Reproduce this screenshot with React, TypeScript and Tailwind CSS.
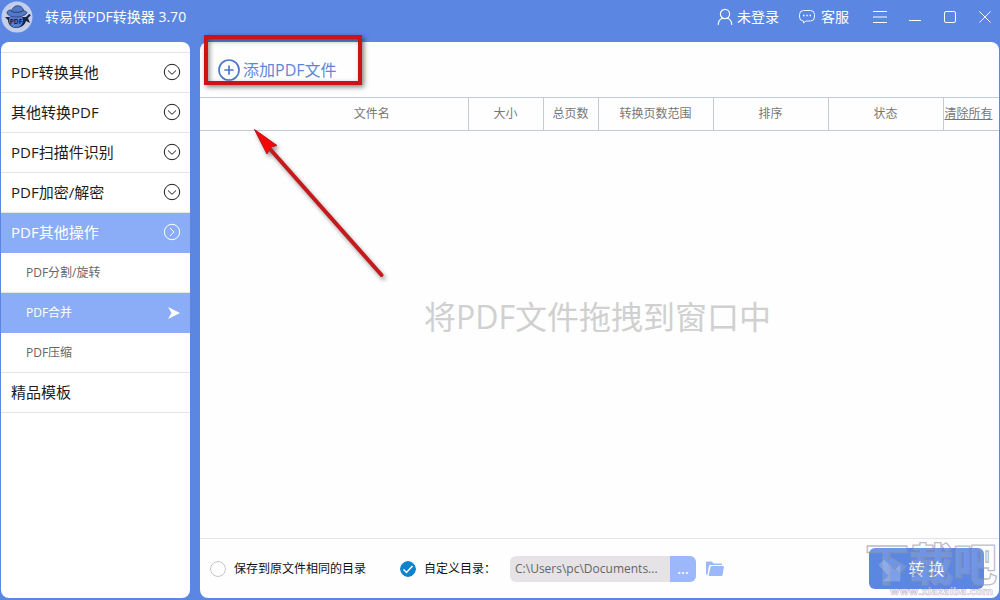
import { useState } from 'react';
import { CirclePlus } from 'lucide-react';

type SubItem = { id: string; label: string };
type Section = { id: string; label: string; items?: SubItem[]; plain?: boolean };

const SECTIONS: Section[] = [
  { id: 'to-other', label: 'PDF转换其他' },
  { id: 'to-pdf', label: '其他转换PDF' },
  { id: 'ocr', label: 'PDF扫描件识别' },
  { id: 'crypt', label: 'PDF加密/解密' },
  {
    id: 'tools',
    label: 'PDF其他操作',
    items: [
      { id: 'split', label: 'PDF分割/旋转' },
      { id: 'merge', label: 'PDF合并' },
      { id: 'compress', label: 'PDF压缩' },
    ],
  },
  { id: 'templates', label: '精品模板', plain: true },
];

const COLUMNS = [
  { label: '文件名', className: 'pl-[76px]' },
  { label: '大小', className: 'w-[75px]' },
  { label: '总页数', className: 'w-[55px]' },
  { label: '转换页数范围', className: 'w-[115px]' },
  { label: '排序', className: 'w-[115px]' },
  { label: '状态', className: 'w-[115px]' },
];

const WINDOW_BUTTONS = [
  { label: '菜单', d: 'M1 2.500h14M1 8h14M1 13.500h14' },
  { label: '最小化', d: 'M2 11.500h12' },
  { label: '最大化', d: 'M4 2.500h8a1.500 1.500 0 0 1 1.500 1.500v8a1.500 1.500 0 0 1-1.500 1.500H4A1.500 1.500 0 0 1 2.500 12V4A1.500 1.500 0 0 1 4 2.500z' },
  { label: '关闭', d: 'M2.500 2.500l11 11M13.500 2.500l-11 11' },
];

function Logo() {
  return (
    <svg viewBox="0 0 32 32" className="h-8 w-8 shrink-0" aria-hidden>
      <circle cx="16" cy="16" r="15.500" fill="#c3cfea" />
      <path d="M7 16h18l3-3 2 1-3 3 2 5-4-2c-1 4-5 7-10 7-5 0-8-4-8-8l-3-3z" fill="#1b2440" />
      <circle cx="15" cy="19.500" r="7" fill="#547ed0" />
      <path d="M6 12c0-3 3-3 5-3 1-3 4-5 7-4 3 0 4 3 5 5 2 0 3 1 3 2-2 3-7 4-11 4-4 0-8-1-9-4z" fill="#5179c9" stroke="#2c3c66" strokeWidth="0.800" />
      <path d="M10 10c4 2 9 2 13-1" fill="none" stroke="#2c3c66" />
      <text x="15" y="23" textAnchor="middle" fontSize="6.500" fontWeight="700" fill="#17203b">
        PDF
      </text>
    </svg>
  );
}

function UserIcon() {
  return (
    <svg viewBox="0 0 16 18" className="h-[18px] w-4" fill="none" stroke="currentColor" strokeWidth="1.200" aria-hidden>
      <circle cx="8" cy="6" r="4.600" />
      <path d="M1.300 16.500c0-3.500 2-5.500 4.400-6.300M14.700 16.500c0-3.500-2-5.500-4.400-6.300" strokeLinecap="round" />
    </svg>
  );
}

function ChatIcon() {
  return (
    <svg viewBox="0 0 16 16" className="h-4 w-4" fill="none" stroke="currentColor" strokeWidth="0.900" aria-hidden>
      <path d="M4.500 1.500h7a4 4 0 0 1 4 4v2.500a4 4 0 0 1-4 4H7l-2.500 2v-2a4 4 0 0 1-4-4V5.500a4 4 0 0 1 4-4z" />
      <path d="M4 6.500h1.500M7.250 6.500h1.500M10.500 6.500H12" strokeWidth="1.500" />
    </svg>
  );
}

function CircleChevron({ open }: { open: boolean }) {
  return (
    <svg viewBox="0 0 18 18" className="h-[18px] w-[18px]" fill="none" stroke="currentColor" aria-hidden>
      <circle cx="9" cy="9" r="7.700" />
      <path d={open ? 'M7 5l4 4-4 4' : 'M5 7.500l4 3.800 4-3.800'} />
    </svg>
  );
}

function FolderIcon() {
  return (
    <svg viewBox="0 0 18 16" className="h-4 w-[18px]" fill="#9cb8fa" aria-hidden>
      <path d="M0 13V1.500Q0 .5 1 .5h5l1.500 2H15q1 0 1 1V4H4.500Q3.300 4 3 5L1.300 14Q0 14 0 13z" />
      <path d="M4.800 5H17q1 0 .9 1l-1.300 8q-.2 1-1.200 1H2.500z" />
    </svg>
  );
}

function RadioMark({ checked }: { checked: boolean }) {
  return (
    <svg viewBox="0 0 16 16" className="h-4 w-4 rounded-full peer-focus-visible:ring-2" fill="none" aria-hidden>
      <circle cx="8" cy="8" r="7.500" fill={checked ? '#0e83cc' : '#fff'} stroke={checked ? '#0e83cc' : '#bdbdbd'} />
      {checked && <path d="M3.500 8.500l3 3 6-6.500" stroke="#fff" strokeWidth="1.500" />}
    </svg>
  );
}

function Watermark() {
  return (
    <svg viewBox="0 0 136 60" className="pointer-events-none absolute right-0 bottom-0 h-[60px] w-[136px]" aria-hidden>
      <text
        x="2"
        y="43"
        fontSize="44"
        fontWeight="900"
        fill="#ffffff"
        fillOpacity="0.12"
        stroke="#8c92a3"
        strokeOpacity="0.6"
        strokeWidth="1.300"
      >
        下载吧
      </text>
      <path d="M21 22l11 10 5-5v16H20l6-5-10-11z" fill="#ffffff" fillOpacity="0.2" stroke="#9ca9d0" strokeOpacity="0.5" />
      <text x="27" y="57" fontSize="11" fontWeight="700" fill="#ffffff" fillOpacity="0.6" stroke="#9298a6" strokeOpacity="0.65" strokeWidth="0.6">
        www.xiazaiba.com
      </text>
    </svg>
  );
}

// Red frame and arrow pointing at the add button
function Callout() {
  return (
    <>
      <div className="pointer-events-none absolute -top-[7px] left-1 h-[50px] w-[158px] border-4 border-[#cc1417] shadow-[2px_2px_5px_rgba(0,0,0,0.5),inset_2px_2px_5px_rgba(0,0,0,0.4)]" />
      <svg
        viewBox="0 0 140 160"
        className="pointer-events-none absolute top-[82px] left-[50px] h-[160px] w-[140px] drop-shadow-[2px_3px_2px_rgba(0,0,0,0.4)]"
        aria-hidden
      >
        <path d="M20 25L131.500 151" stroke="#c41a1c" strokeWidth="4" strokeLinecap="round" />
        <path d="M4.500 5.500L27 21.500l-6 1.500-4 7z" fill="#f50707" stroke="#bd1517" />
      </svg>
    </>
  );
}

function Sidebar() {
  const [openId, setOpenId] = useState('tools');
  const [activeItem, setActiveItem] = useState('merge');

  return (
    <nav className="w-[189px] shrink-0 overflow-hidden rounded-lg bg-white pt-2.5">
      <div className="border-t border-[#e5e5e8]">
        {SECTIONS.map((section) => {
          const open = section.id === openId && !section.plain;
          return (
            <div key={section.id}>
              <button
                type="button"
                onClick={() => setOpenId(section.id)}
                className={`flex h-10 w-full items-center justify-between border-b pr-[9px] pb-px pl-2.5 text-[15px] ${
                  open ? 'border-[#8badf7] bg-[#8badf7] text-white' : 'border-[#e5e5e8] text-[#1c1c1c]'
                }`}
              >
                <span>{section.label}</span>
                {!section.plain && <CircleChevron open={open} />}
              </button>
              {open &&
                section.items?.map((item) => {
                  const active = item.id === activeItem;
                  return (
                    <button
                      key={item.id}
                      type="button"
                      onClick={() => setActiveItem(item.id)}
                      className={`flex h-10 w-full items-center justify-between border-b pr-2.5 pl-[25px] text-xs ${
                        active ? 'border-[#8badf7] bg-[#8badf7] text-white' : 'border-[#e5e5e8] text-[#666]'
                      }`}
                    >
                      <span>{item.label}</span>
                      {active && (
                        <svg viewBox="0 0 12 14" className="h-3.5 w-3" fill="currentColor" aria-hidden>
                          <path d="M0 1l12 6-12 6 3.500-6z" />
                        </svg>
                      )}
                    </button>
                  );
                })}
            </div>
          );
        })}
      </div>
    </nav>
  );
}

export default function App() {
  const [target, setTarget] = useState<'same' | 'custom'>('custom');
  const [path, setPath] = useState('C:\\Users\\pc\\Documents...');

  return (
    <div className="flex min-h-screen flex-col bg-[#5b87e3] px-px pb-0.5 font-['Open_Sans','Noto_Sans_CJK_SC',sans-serif]">
      <header className="flex h-[42px] items-center justify-between pr-1.5 pb-2 text-sm text-white">
        <div className="flex items-center gap-3">
          <Logo />
          <h1>转易侠PDF转换器 3.70</h1>
        </div>
        <div className="flex items-center">
          <button type="button" className="mr-5 flex items-center gap-1">
            <UserIcon />
            未登录
          </button>
          <button type="button" className="mr-[23px] flex items-center gap-1.5">
            <ChatIcon />
            客服
          </button>
          <div className="flex items-center gap-[19px]">
            {WINDOW_BUTTONS.map((button) => (
              <button key={button.label} type="button" aria-label={button.label}>
                <svg viewBox="0 0 16 16" className="h-4 w-4" fill="none" stroke="currentColor" aria-hidden>
                  <path d={button.d} />
                </svg>
              </button>
            ))}
          </div>
        </div>
      </header>

      <div className="flex flex-1 gap-2.5">
        <Sidebar />

        <main className="relative flex min-w-0 flex-1 flex-col rounded-lg bg-[#fefefe]">
          <div className="flex h-[55px] items-center pl-[17px]">
            <button type="button" className="flex items-center gap-0.5 text-base text-[#5f88d4]">
              <CirclePlus className="h-6 w-6 text-[#4b77cc]" strokeWidth={1.7} aria-hidden />
              添加PDF文件
            </button>
          </div>

          <table className="w-full table-fixed border-collapse text-xs text-[#777]">
            <thead>
              <tr className="h-[33px] border-y border-[#c3cad2]">
                {COLUMNS.map((col) => (
                  <th key={col.label} className={`border-r border-[#c3cad2] font-normal ${col.className}`}>
                    {col.label}
                  </th>
                ))}
                <th className="w-14 pl-px text-left font-normal">
                  <button type="button" className="underline">
                    清除所有
                  </button>
                </th>
              </tr>
            </thead>
          </table>

          <div className="flex flex-1 items-center justify-center pr-1 pb-9">
            <p className="text-[32px] text-[#d0d0d0]">将PDF文件拖拽到窗口中</p>
          </div>

          <footer className="flex h-[60px] items-center border-t border-[#e2e3e6] pr-[15px] pl-2.5 text-xs text-[#111]">
            <label className="mr-[34px] flex items-center gap-2">
              <input
                type="radio"
                name="target"
                checked={target === 'same'}
                onChange={() => setTarget('same')}
                className="peer sr-only"
              />
              <RadioMark checked={target === 'same'} />
              保存到原文件相同的目录
            </label>
            <label className="mr-3.5 flex items-center gap-2">
              <input
                type="radio"
                name="target"
                checked={target === 'custom'}
                onChange={() => setTarget('custom')}
                className="peer sr-only"
              />
              <RadioMark checked={target === 'custom'} />
              自定义目录：
            </label>
            <div className="flex h-[26px] overflow-hidden rounded-md">
              <input
                type="text"
                aria-label="自定义目录"
                value={path}
                onChange={(e) => setPath(e.target.value)}
                className="w-40 bg-[#e5e3e5] pl-[5px] text-xs text-[#666] outline-none"
              />
              <button type="button" aria-label="浏览" className="w-[26px] bg-[#9cb8fa] text-sm font-semibold text-white">
                ...
              </button>
            </div>
            <button type="button" aria-label="打开目录" className="ml-2.5">
              <FolderIcon />
            </button>
            <button type="button" className="ml-auto h-[41px] w-[115px] rounded-md bg-[#5b87e3] text-base text-white">
              转 换
            </button>
          </footer>

          <Callout />
          <Watermark />
        </main>
      </div>
    </div>
  );
}
